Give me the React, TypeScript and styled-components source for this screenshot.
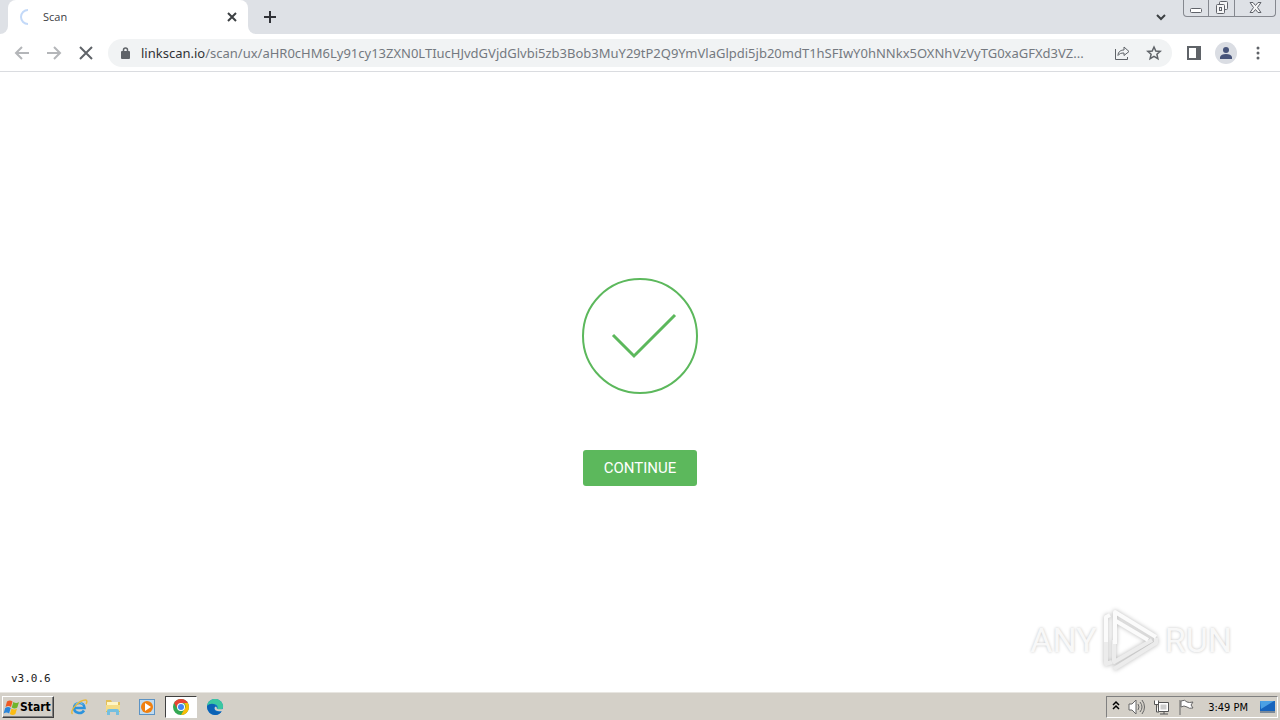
import React from "react";
import styled, { createGlobalStyle } from "styled-components";

const Global = createGlobalStyle`
  * { box-sizing: border-box; }
  body { margin: 0; background: #fff; font-family: "Open Sans", "Noto Sans", sans-serif; }
  button { font: inherit; color: inherit; border: 0; padding: 0; background: none; }
  svg { display: block; flex: none; }
`;

const Screen = styled.div`
  display: flex;
  flex-direction: column;
  min-height: 100vh;
`;

const TabStrip = styled.header`
  display: flex;
  height: 34px;
  background: #dee1e6;
`;

const PreviousEdge = styled.div`
  width: 8px;
  background: #fff;
  &::before {
    content: "";
    display: block;
    height: 100%;
    background: #dee1e6;
    border-radius: 0 0 8px 0;
  }
`;

const Tab = styled.div`
  display: flex;
  align-items: center;
  width: 240px;
  padding: 0 10px 0 11px;
  gap: 8px;
  background: #fff;
  border-radius: 8px 8px 0 0;
  font-size: 11px;
  color: #3c4043;
`;

const TabTitle = styled.span`
  flex: 1;
  line-height: 16px;
  padding-bottom: 1px;
`;

const TabStripRest = styled.div`
  flex: 1;
  background: #fff;
`;

const TabStripFill = styled.div`
  display: flex;
  height: 100%;
  background: #dee1e6;
  border-radius: 0 0 0 8px;
`;

const IconButton = styled.button<{ $size?: number }>`
  display: flex;
  align-items: center;
  justify-content: center;
  width: ${(p) => p.$size ?? 32}px;
  height: ${(p) => p.$size ?? 32}px;
  flex: none;
`;

const NewTab = styled(IconButton)`
  margin: 1px 0 0 6px;
`;

const TabSearch = styled(IconButton)`
  margin: 1px 6px 0 auto;
`;

const WindowControls = styled.div`
  display: flex;
  height: 17px;
  margin-right: 4px;
  border: 1px solid #85888f;
  border-top: 0;
  border-radius: 0 0 4px 4px;
`;

const WindowButton = styled.button<{ $width: number }>`
  display: flex;
  align-items: center;
  justify-content: center;
  width: ${(p) => p.$width}px;
  & + & { border-left: 1px solid #85888f; }
`;

const Toolbar = styled.nav`
  display: flex;
  align-items: center;
  height: 38px;
  padding: 0 6px;
  border-bottom: 1px solid #dadce0;
  background: #fff;
`;

const AddressBar = styled.div`
  display: flex;
  align-items: center;
  flex: 1;
  min-width: 0;
  height: 28px;
  margin: 0 6px;
  padding: 0 2px 0 12px;
  border-radius: 14px;
  background: #f1f3f4;
`;

const Url = styled.a`
  flex: 1;
  min-width: 0;
  margin: 0 2px 0 9px;
  overflow: hidden;
  text-overflow: ellipsis;
  white-space: nowrap;
  font-family: "Noto Sans", "Open Sans", sans-serif;
  font-size: 13px;
  font-weight: 400;
  line-height: 20px;
  color: #747980;
  text-decoration: none;
`;

const Host = styled.span`
  color: #303236;
`;

const Page = styled.main`
  position: relative;
  display: flex;
  flex: 1;
  flex-direction: column;
  align-items: center;
  justify-content: center;
  gap: 56px;
`;

const ContinueButton = styled.button`
  height: 36px;
  padding: 0 21px;
  border-radius: 3px;
  background: #5cb85c;
  color: #fff;
  font-family: Roboto, sans-serif;
  font-size: 15px;
  font-weight: 400;
`;

const Version = styled.footer`
  position: absolute;
  left: 11px;
  bottom: 6px;
  font-family: "DejaVu Sans Mono", monospace;
  font-size: 11px;
  line-height: 14px;
  color: #222;
`;

const Watermark = styled.div`
  position: absolute;
  right: 48px;
  bottom: 20px;
  display: flex;
  align-items: center;
  gap: 5px;
  font-family: Roboto, sans-serif;
  font-size: 34px;
  line-height: 64px;
  color: #f8f8f8;
  text-shadow: 0 0 3px #c4c4c4;
`;

const Taskbar = styled.footer`
  display: flex;
  align-items: center;
  height: 28px;
  padding: 1px 2px 0;
  border-top: 1px solid #e8e6e1;
  background: #d4d0c8;
  font-family: "DejaVu Sans Condensed", "DejaVu Sans", sans-serif;
  font-size: 11px;
`;

const StartButton = styled.button`
  display: flex;
  align-items: center;
  width: 52px;
  height: 22px;
  margin-right: 8px;
  border: 1px solid;
  border-color: #fff #404040 #404040 #fff;
  box-shadow: inset -1px -1px #808080;
  font-size: 12px;
  font-weight: 700;
  color: #000;
`;

const TaskButton = styled.button<{ $active?: boolean }>`
  display: flex;
  align-items: center;
  justify-content: center;
  width: 32px;
  height: 22px;
  margin: 0 1px;
  border: 1px solid transparent;
  ${(p) => p.$active && `
    background: #fff;
    border-color: #404040 #fff #fff #404040;
  `}
`;

const Tray = styled.div`
  display: flex;
  align-items: center;
  gap: 8px;
  height: 22px;
  margin-left: auto;
  padding: 0 1px 0 5px;
  border: 1px solid;
  border-color: #808080 #fff #fff #808080;
`;

const Clock = styled.time`
  margin: 0 3px 0 5px;
  color: #000;
`;

const HOST = "linkscan.io";
const PATH =
  "/scan/ux/aHR0cHM6Ly91cy13ZXN0LTIucHJvdGVjdGlvbi5zb3Bob3MuY29tP2Q9YmVlaGlpdi5jb20mdT1hSFIwY0hNNkx5OXNhVzVyTG0xaGFXd3VZ...";

const Arrow = ({ flip }: { flip?: boolean }) => (
  <svg width="16" height="16" viewBox="0 0 16 16" fill="none" stroke="#b4b6b9" strokeWidth="2">
    <path d={flip ? "M1 8h13M8 2l6 6-6 6" : "M15 8H2M8 2L2 8l6 6"} />
  </svg>
);

const PlayMark = () => (
  <svg width="58" height="64" viewBox="0 0 58 64" overflow="visible" style={{ filter: "drop-shadow(0 0 2px #b8b8b8)" }}>
    <g fill="none" stroke="#ececec" strokeWidth="4" strokeLinejoin="round">
      <path d="M4 32v24l6-2" />
      <path d="M12 32v22l38-22" />
      <path d="M12 61l42-26v-5" />
    </g>
    <g fill="none" stroke="#fbfbfb" strokeWidth="4" strokeLinejoin="round">
      <path d="M4 34V9l4-2" />
      <path d="M13 36V4l41 25" />
      <path d="M14 13l32 19" />
    </g>
  </svg>
);

const StartFlag = () => (
  <svg width="17" height="17" viewBox="0 0 17 17">
    <path d="M4 2.500q3-2 5.500 0L8 8q-2.500-1.800-5.500 0z" fill="#ee5a24" />
    <path d="M10.300 3q3 1.800 5.700 0l-1.700 5.500q-2.600 1.800-5.500 0z" fill="#6fb52c" />
    <path d="M2.200 9q3-1.800 5.500 0l-1.600 5.500q-2.600-1.800-5.500 0z" fill="#2a85da" />
    <path d="M8.500 9.500q3 1.800 5.500 0L12.400 15q-2.600 1.800-5.500 0z" fill="#fbbc13" />
  </svg>
);

const ExplorerE = () => (
  <svg width="18" height="18" viewBox="0 0 18 18" fill="none">
    <path d="M14 12.500c-2.500 4-10 3-10-2.500C4 3.500 14.500 3 14.500 10H5" stroke="#2b93dd" strokeWidth="2.600" />
    <path d="M5 6.500c2-2.500 6-2.700 8 0" stroke="#8bd0f5" />
    <path d="M2.500 16C-1 13 9 2 15.500 2c2 0 1.500 2.500.5 4" stroke="#e8b93a" strokeWidth="1.400" />
  </svg>
);

const Folder = () => (
  <svg width="18" height="18" viewBox="0 0 18 18">
    <path d="M2 2h5l1 2h8v10H2z" fill="#e3bf58" />
    <path d="M3 4h11v4H3z" fill="#fff5c4" />
    <path d="M2 7h14v6H2z" fill="#f5dc86" />
    <path d="M3 17v-4q0-2 2-2h8q2 0 2 2v4h-3v-3H6v3z" fill="#74bfe0" />
  </svg>
);

const MediaPlayer = () => (
  <svg width="18" height="18" viewBox="0 0 18 18">
    <path d="M1 1h16v16H1z" fill="#5c93c4" />
    <path d="M2 2h14v14H2z" fill="#c0dbf0" />
    <circle cx="9" cy="9" r="6" fill="#f08010" />
    <path d="M7 5l6 4-6 4z" fill="#fff" />
  </svg>
);

const Chrome = () => (
  <svg width="18" height="18" viewBox="0 0 18 18">
    <circle cx="9" cy="9" r="8" fill="#34a853" />
    <path d="M2.100 5A8 8 0 0 1 15.900 5H9a4 4 0 0 0-3.500 6z" fill="#ea4335" />
    <path d="M15.900 5A8 8 0 0 1 9 17l3.500-6A4 4 0 0 0 12 5z" fill="#fbbc05" />
    <circle cx="9" cy="9" r="4" fill="#fff" />
    <circle cx="9" cy="9" r="3" fill="#4285f4" />
  </svg>
);

const Edge = () => (
  <svg width="18" height="18" viewBox="0 0 18 18">
    <circle cx="9" cy="9" r="8" fill="#1275c9" />
    <path d="M1 8C2 0 14-2 17 7c1 5-4 6-6 4 2-3-1-5-4-5-3 0-5 1-6 2z" fill="#3bc7a1" />
    <path d="M1 8c4-4 9-2 9 1-3 0-3 5 3 5 2 0 3-1 3-1-5 8-15 3-15-5z" fill="#0b62b5" />
    <path d="M10 9c-1 2 0 4 7 3" fill="none" stroke="#d4d0c8" strokeWidth="2" />
  </svg>
);

export default function App() {
  return (
    <Screen>
      <Global />
      <TabStrip>
        <PreviousEdge />
        <Tab>
          <svg width="16" height="16" viewBox="0 0 16 16" fill="none" stroke="#c3d9f8" strokeWidth="2">
            <path d="M9 1a7 7 0 0 0 0 14" />
          </svg>
          <TabTitle>Scan</TabTitle>
          <IconButton $size={12} aria-label="Close tab">
            <svg width="10" height="10" viewBox="0 0 10 10" stroke="#3c4043" strokeWidth="2"><path d="M1 1l8 8M9 1l-8 8" /></svg>
          </IconButton>
        </Tab>
        <TabStripRest>
          <TabStripFill>
            <NewTab aria-label="New tab">
              <svg width="12" height="12" viewBox="0 0 12 12" stroke="#303237" strokeWidth="2"><path d="M6 0v12M0 6h12" /></svg>
            </NewTab>
            <TabSearch aria-label="Search tabs">
              <svg width="10" height="8" viewBox="0 0 10 8" fill="none" stroke="#3c4043" strokeWidth="2"><path d="M1 2l4 4 4-4" /></svg>
            </TabSearch>
            <WindowControls>
              <WindowButton $width={24} aria-label="Minimize">
                <svg width="12" height="12" viewBox="0 0 12 12" fill="#fff" stroke="#60636a"><rect x=".5" y="6.500" width="11" height="4" rx="1" /></svg>
              </WindowButton>
              <WindowButton $width={26} aria-label="Restore">
                <svg width="14" height="14" viewBox="0 0 14 14" fill="#f5f5f6" stroke="#60636a"><rect x="4.500" y=".5" width="8" height="8" rx="1" /><rect x="1.500" y="3.500" width="8" height="9" rx="1" /><rect x="4.500" y="6.500" width="2" height="3" /></svg>
              </WindowButton>
              <WindowButton $width={41} aria-label="Close">
                <svg width="13" height="14" viewBox="0 0 13 14" fill="#f5f5f6" stroke="#60636a"><path d="M1 1.500h3l2.500 3 2.500-3h3l-3.500 5 3.500 5H9l-2.500-3-2.500 3H1l3.500-5z" /></svg>
              </WindowButton>
            </WindowControls>
          </TabStripFill>
        </TabStripRest>
      </TabStrip>
      <Toolbar>
        <IconButton aria-label="Back"><Arrow /></IconButton>
        <IconButton aria-label="Forward"><Arrow flip /></IconButton>
        <IconButton aria-label="Stop">
          <svg width="14" height="14" viewBox="0 0 14 14" stroke="#5f6368" strokeWidth="2"><path d="M1 1l12 12M13 1L1 13" /></svg>
        </IconButton>
        <AddressBar>
          <svg width="12" height="14" viewBox="0 0 12 14"><rect x="1" y="5" width="9" height="8" rx="1" fill="#5f6368" /><path d="M3.500 6V4a2 2 0 0 1 4 0v2" fill="none" stroke="#5f6368" strokeWidth="1.500" /></svg>
          <Url href="#"><Host>{HOST}</Host>{PATH}</Url>
          <IconButton aria-label="Share">
            <svg width="16" height="16" viewBox="0 0 16 16" fill="none" stroke="#5f6368"><path d="M1.500 4v10.500h12V12M4 10.500c0-4 3-5.500 6-5.500V2l5 4.500-5 4V8c-3 0-4.500.5-6 2.500z" /></svg>
          </IconButton>
          <IconButton aria-label="Bookmark this tab">
            <svg width="16" height="16" viewBox="0 0 16 16" fill="none" stroke="#5f6368" strokeWidth="1.500"><path d="M8 2l1.800 4 4.400.4-3.300 2.900 1 4.300L8 11.300l-3.900 2.300 1-4.300-3.300-2.900 4.400-.4z" /></svg>
          </IconButton>
        </AddressBar>
        <IconButton aria-label="Side panel">
          <svg width="14" height="14" viewBox="0 0 14 14"><path d="M1 1h12v12H1z" fill="none" stroke="#5f6368" strokeWidth="2" /><path d="M9 1h4v12H9z" fill="#5f6368" /></svg>
        </IconButton>
        <IconButton aria-label="Profile">
          <svg width="22" height="22" viewBox="0 0 22 22"><circle cx="11" cy="11" r="11" fill="#dadde3" /><circle cx="11" cy="8" r="3" fill="#47547a" /><path d="M5 17v-2q1-3 6-3t6 3v2z" fill="#47547a" /></svg>
        </IconButton>
        <IconButton aria-label="Menu">
          <svg width="4" height="14" viewBox="0 0 4 14" fill="#5f6368"><circle cx="2" cy="2" r="1.500" /><circle cx="2" cy="7" r="1.500" /><circle cx="2" cy="12" r="1.500" /></svg>
        </IconButton>
      </Toolbar>
      <Page>
        <svg width="116" height="116" viewBox="0 0 116 116" fill="none" stroke="#5cb85c" role="img" aria-label="Success">
          <circle cx="58" cy="58" r="57" strokeWidth="2" />
          <path d="M31 57l21 21 41-41" strokeWidth="3" />
        </svg>
        <ContinueButton>CONTINUE</ContinueButton>
        <Version>v3.0.6</Version>
        <Watermark><span>ANY</span><PlayMark /><span>RUN</span></Watermark>
      </Page>
      <Taskbar>
        <StartButton><StartFlag />Start</StartButton>
        <TaskButton aria-label="Internet Explorer"><ExplorerE /></TaskButton>
        <TaskButton aria-label="File Explorer"><Folder /></TaskButton>
        <TaskButton aria-label="Media Player"><MediaPlayer /></TaskButton>
        <TaskButton $active aria-label="Chrome"><Chrome /></TaskButton>
        <TaskButton aria-label="Edge"><Edge /></TaskButton>
        <Tray>
          <svg width="8" height="14" viewBox="0 0 8 14" fill="none" stroke="#000" strokeWidth="1.500"><path d="M1 5l3-3 3 3M1 9l3-3 3 3" /></svg>
          <svg width="17" height="16" viewBox="0 0 17 16" fill="#fff" stroke="#666"><path d="M1 5h3l4-4v14l-4-4H1z" /><path d="M10 5q2 3 0 6M12 3q4 5 0 10M14 1q5 7 0 14" fill="none" /></svg>
          <svg width="17" height="16" viewBox="0 0 17 16" fill="#fff" stroke="#555"><path d="M5.500 3.500h10v9h-10zM7 15h8M11 13v2M1.500 1.500v4h4v-4M3.500 5v8H6" /><path d="M7.500 5.500h6v5h-6z" fill="#ccc" stroke="none" /></svg>
          <svg width="17" height="16" viewBox="0 0 17 16" fill="#fff" stroke="#666"><path d="M2 1v15M3 2q4-2 6 1 2 1 6 0l-2 3 2 3q-4 1-6-1-3-2-6 0z" /></svg>
          <Clock>3:49 PM</Clock>
          <svg width="17" height="14" viewBox="0 0 17 14"><path d="M1 1h15v10H1z" fill="#1764bd" /><path d="M1 1h14L2 9z" fill="#4ba0e4" /><path d="M1 12h15" stroke="#25456b" /></svg>
        </Tray>
      </Taskbar>
    </Screen>
  );
}
